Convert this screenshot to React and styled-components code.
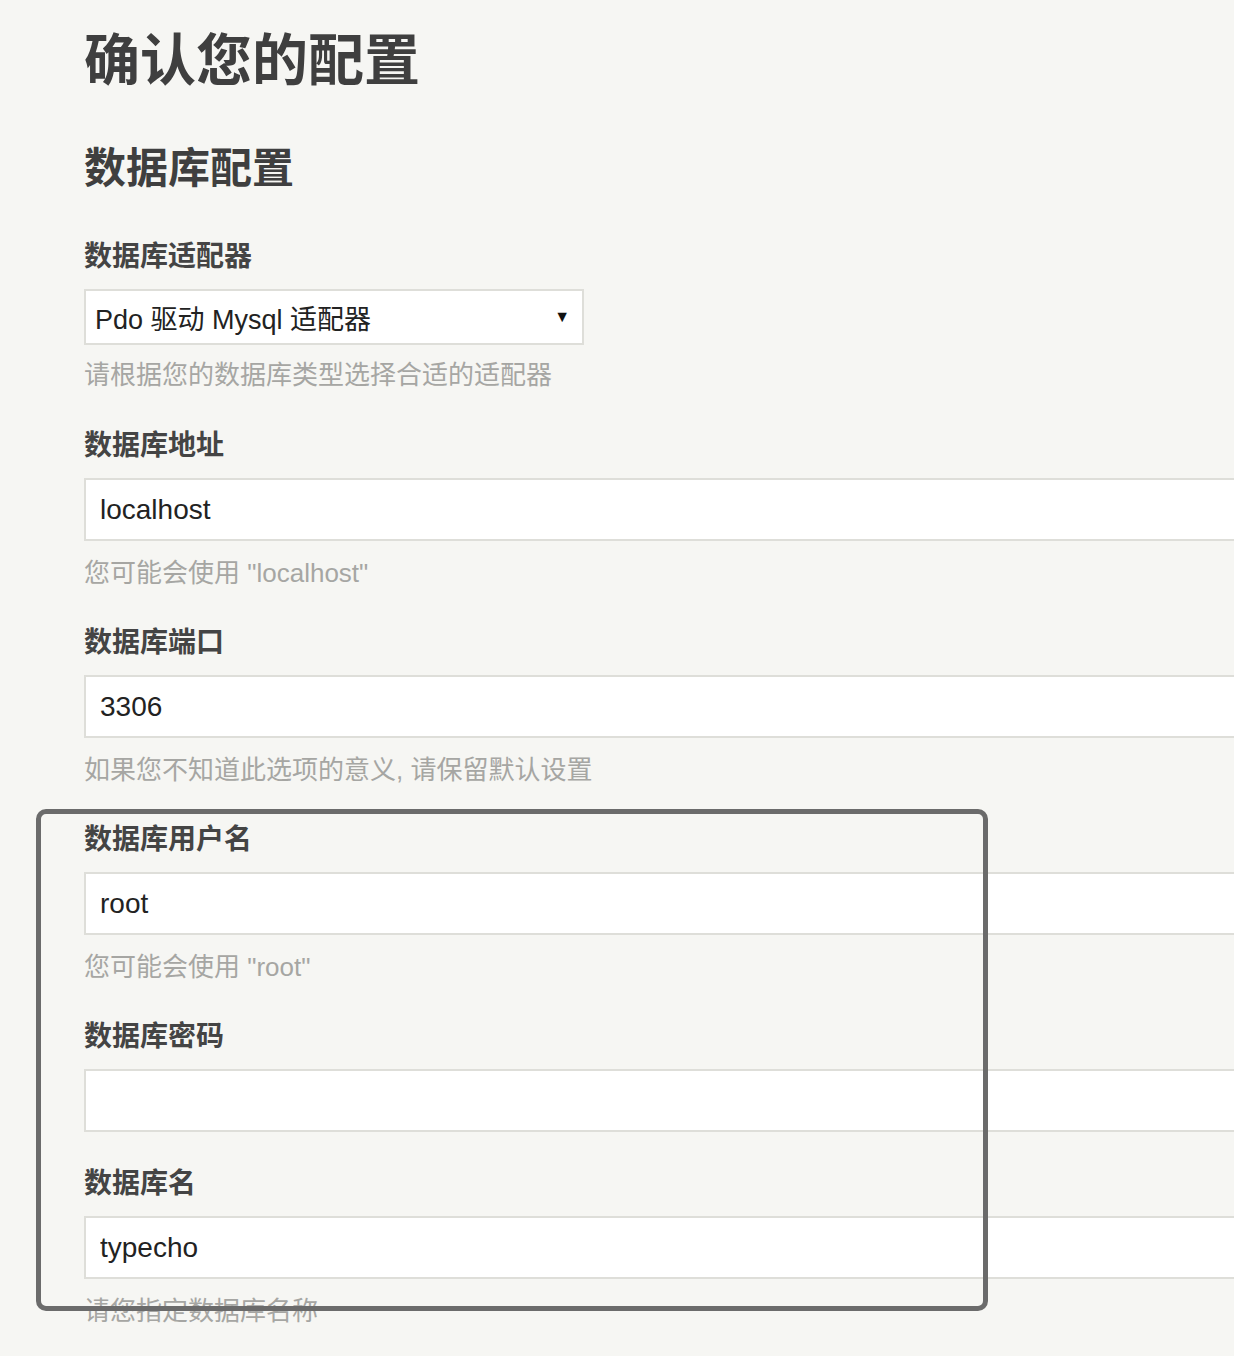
import React from 'react';
import styled, { createGlobalStyle } from 'styled-components';

const GlobalStyle = createGlobalStyle`
    html, body {
        margin: 0;
        padding: 0;
        background-color: #f6f6f3;
        overflow-x: hidden;
    }
    body {
        font-family: "Liberation Sans", "Noto Sans CJK SC", sans-serif;
        color: #444444;
    }
`;

const Page = styled.div`
    position: relative;
    padding: 25px 0 40px 84px;
    width: 1200px;
`;

const Title = styled.h1`
    margin: 0;
    font-size: 56px;
    line-height: 72px;
    font-weight: bold;
    color: #3f3f3f;
`;

const SubTitle = styled.h2`
    margin: 44px 0 42px;
    font-size: 42px;
    line-height: 56px;
    font-weight: bold;
    color: #3f3f3f;
`;

const FieldList = styled.ul`
    list-style: none;
    margin: 0;
    padding: 0;
`;

const Field = styled.li`
    padding-bottom: ${(p) => (p.$first ? '35px' : '34px')};
`;

const Label = styled.label`
    display: block;
    font-size: 28px;
    line-height: 36px;
    font-weight: bold;
    color: #444444;
    margin-bottom: 14px;
`;

const TextInput = styled.input`
    display: block;
    box-sizing: border-box;
    width: 100%;
    height: 63px;
    padding: 0 14px;
    border: 2px solid #deded9;
    background: #ffffff;
    font-family: "Liberation Sans", "Noto Sans CJK SC", sans-serif;
    font-size: 28px;
    color: #222222;
    outline: none;
`;

const SelectBox = styled.div`
    box-sizing: border-box;
    width: 500px;
    height: 56px;
    display: flex;
    align-items: center;
    justify-content: space-between;
    padding: 0 12px 0 9px;
    border: 2px solid #deded9;
    background: #ffffff;
    font-size: 27px;
    color: #222222;
`;

const Arrow = styled.span`
    font-size: 16px;
    color: #111111;
`;

const Description = styled.p`
    margin: ${(p) => (p.$tight ? '12px' : '14px')} 0 0;
    font-size: 26px;
    line-height: 36px;
    color: #a6a6a3;
`;

const Highlight = styled.div`
    position: absolute;
    left: 36px;
    top: 809px;
    width: 952px;
    height: 502px;
    box-sizing: border-box;
    border: 5px solid #6b6b6b;
    border-radius: 10px;
    pointer-events: none;
`;

const fields = [
    { label: '数据库地址', value: 'localhost', desc: '您可能会使用 "localhost"' },
    { label: '数据库端口', value: '3306', desc: '如果您不知道此选项的意义, 请保留默认设置' },
    { label: '数据库用户名', value: 'root', desc: '您可能会使用 "root"' },
    { label: '数据库密码', value: '', type: 'password' },
    { label: '数据库名', value: 'typecho', desc: '请您指定数据库名称' },
];

const App = () => {
    return (
        <Page>
            <GlobalStyle />
            <Title>确认您的配置</Title>
            <SubTitle>数据库配置</SubTitle>
            <FieldList>
                <Field $first>
                    <Label>数据库适配器</Label>
                    <SelectBox>
                        <span>Pdo 驱动 Mysql 适配器</span>
                        <Arrow>▼</Arrow>
                    </SelectBox>
                    <Description $tight>请根据您的数据库类型选择合适的适配器</Description>
                </Field>
                {fields.map((f) => (
                    <Field key={f.label}>
                        <Label>{f.label}</Label>
                        <TextInput type={f.type || 'text'} defaultValue={f.value} />
                        {f.desc && <Description>{f.desc}</Description>}
                    </Field>
                ))}
            </FieldList>
            <Highlight />
        </Page>
    );
};

export default App;
